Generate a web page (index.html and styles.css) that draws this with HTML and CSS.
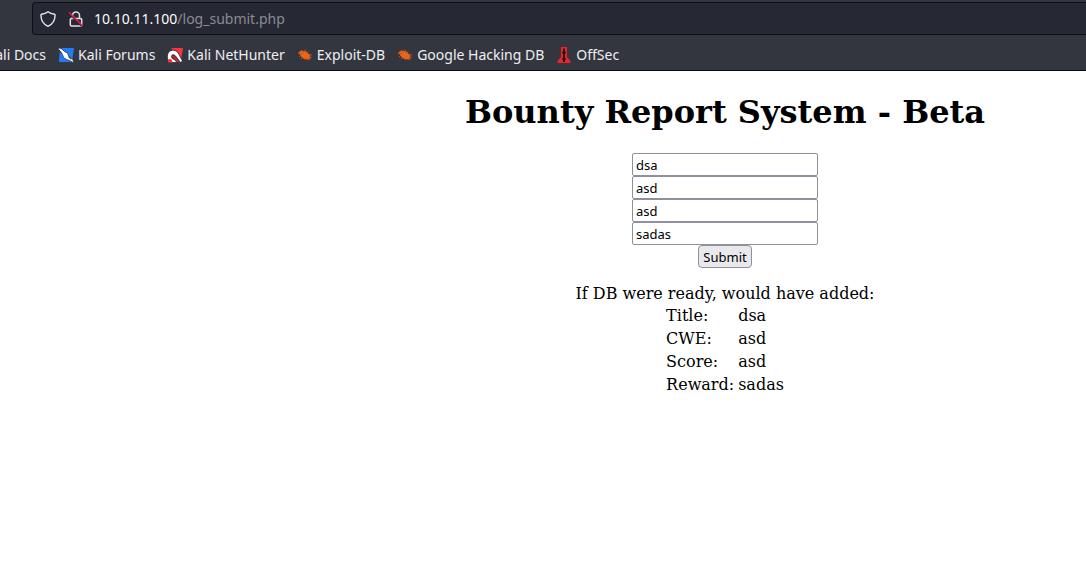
FILE: index.html
```html
<!DOCTYPE html>
<html lang="en">
<head>
<meta charset="utf-8">
<title>Bounty Report System - Beta</title>
<link rel="stylesheet" href="styles.css">
</head>
<body>
<header class="chrome">
  <div class="address-bar">
    <svg class="shield" width="16" height="16" viewBox="0 0 16 16" fill="none" stroke="#e8e8ec" stroke-width="1.4" stroke-linejoin="round"><path d="M8 .8c1.8 1.4 4 2.200 6.400 2.500.5.1.7.3.7.8C15 9.500 12.500 13.500 8 15.300 3.500 13.500 1 9.500.9 4.100c0-.5.2-.7.7-.8C4 3 6.200 2.200 8 .8z"/></svg>
    <svg class="lock" width="16" height="16" viewBox="0 0 16 16" fill="none"><path d="M4.500 7.500V4.600a3.500 3.500 0 0 1 7 0v2.900M3.500 7.500h9a1.200 1.200 0 0 1 1.200 1.200v5a1.200 1.200 0 0 1-1.200 1.200h-9a1.200 1.200 0 0 1-1.200-1.200v-5a1.200 1.200 0 0 1 1.200-1.200z" stroke="#e0e0e4" stroke-width="1.500"/><path d="M1 2.500l12.500 12.500" stroke="#262833" stroke-width="1.500"/><path d="M1 1.300l13.700 13.700" stroke="#f01a4f" stroke-width="1.500"/></svg>
    <span class="url"><span class="host">10.10.11.100</span>/log_submit.php</span>
  </div>
  <nav class="bookmarks">
    <a class="bookmark clipped" href="#">Kali Docs</a>
    <a class="bookmark" href="#"><svg width="16" height="16" viewBox="0 0 16 16"><path d="M2 1h14l-2 14H1z" fill="#237cf5"/><path d="M0 .5l4 1.500 2.500 2.500 3 1.500 1.500 3.500 4 3 .5 3.500-3-2-4-1.500-3-2-1-3-3-3z" fill="#fff" stroke="#26313e" stroke-width=".8"/><path d="M1 3l3 3.500M10.500 9.500l2.500 3" fill="none" stroke="#202a36"/></svg>Kali Forums</a>
    <a class="bookmark" href="#"><svg width="16" height="16" viewBox="0 0 16 16"><path d="M4 1h12l-2 12z" fill="#f8333c"/><path d="M1.500 15C-.5 10 0 5.500 4 3.500c4-1 7 1 8.500 5l3 5.500-2 1.500-5-6.500C7 7 4.500 7.500 4.500 9.500c0 1.500 1.500 2.500 3.500 3.500l2 2.500H5z" fill="#fff" stroke="#25262c" stroke-width=".8"/><path d="M5 9.500c1-1.500 2.500-1 3.500.5l4 5.200H10L8 12.500z" fill="#d8202f"/><path d="M1 12.500l3-.5 2 3.500H1z" fill="#f52d38"/></svg>Kali NetHunter</a>
    <a class="bookmark" href="#"><svg width="16" height="16" viewBox="0 0 16 16"><path class="bug" d="M1.500 5.500C3.500 3.200 8 3.200 11 6l2.500 3-1.500 3.500C8 13 4.500 11 3.500 8.500z"/><path class="legs" d="M1 6.500h4M4 3l3 3M8 2.500l1 3M11 4.500l-1 2M12 7.500l3 .5M12 10l3 1M4 8l-2 2M6 10l-2 2M9 11l-1 2M12 11l1 2"/></svg>Exploit-DB</a>
    <a class="bookmark" href="#"><svg width="16" height="16" viewBox="0 0 16 16"><path class="bug" d="M1.500 5.500C3.500 3.200 8 3.200 11 6l2.500 3-1.500 3.500C8 13 4.500 11 3.500 8.500z"/><path class="legs" d="M1 6.500h4M4 3l3 3M8 2.500l1 3M11 4.500l-1 2M12 7.500l3 .5M12 10l3 1M4 8l-2 2M6 10l-2 2M9 11l-1 2M12 11l1 2"/></svg>Google Hacking DB</a>
    <a class="bookmark" href="#"><svg width="16" height="16" viewBox="0 0 16 16"><path d="M5 0h6v10l3.500 4v2h-13v-2L5 10z" fill="#e5272b"/><path d="M7 1.500h2L9 4l1 1.500L9 7v3.500l1 2-1 .5v2H7v-2l-1-.5 1-2V7L6 5.500 7 4z" fill="#340d13"/></svg>OffSec</a>
  </nav>
</header>
<main class="page">
  <h1 class="title">Bounty Report System - Beta</h1>
  <form class="report-form">
    <input class="field" type="text" value="dsa" aria-label="Title">
    <input class="field" type="text" value="asd" aria-label="CWE">
    <input class="field" type="text" value="asd" aria-label="Score">
    <input class="field" type="text" value="sadas" aria-label="Reward">
    <button class="submit" type="button">Submit</button>
  </form>
  <p class="message">If DB were ready, would have added:</p>
  <table class="result">
    <tr><td>Title:</td><td>dsa</td></tr>
    <tr><td>CWE:</td><td>asd</td></tr>
    <tr><td>Score:</td><td>asd</td></tr>
    <tr><td>Reward:</td><td>sadas</td></tr>
  </table>
</main>
</body>
</html>
```
FILE: styles.css
```css
body {
  margin: 0;
  background: #fff;
  color: #000;
  font: 16px/19px "DejaVu Serif", serif;
}

.chrome {
  padding-top: 2px;
  background: #33363f;
  border-bottom: 1px solid #0b0b10;
  font: 14px/20px "Noto Sans", sans-serif;
  overflow: hidden;
}

.address-bar {
  display: flex;
  align-items: center;
  height: 31px;
  margin-left: 32px;
  padding-left: 7px;
  background: #262833;
  border: 1px solid #0e0f15;
  border-right: 0;
  border-radius: 4px 0 0 4px;
}

.lock { margin-left: 12px; }

.url {
  margin-left: 10px;
  color: #8b8c92;
}

.host { color: #fbfbfe; }

.bookmarks {
  display: flex;
  align-items: center;
  gap: 12px;
  padding: 10px 0 5px;
}

.bookmark {
  display: flex;
  flex: none;
  align-items: center;
  gap: 4px;
  color: #eeeef2;
  text-decoration: none;
  white-space: nowrap;
}

.clipped {
  justify-content: flex-end;
  width: 46px;
}

.bug { fill: #ed6415; }

.legs {
  fill: none;
  stroke: #b9541f;
  stroke-width: 1;
}

.page {
  display: flex;
  flex-direction: column;
  align-items: center;
  padding: 22px 0 0 364px;
}

.title {
  margin: 0;
  font-size: 32px;
  line-height: 38px;
}

.report-form {
  display: flex;
  flex-direction: column;
  align-items: center;
  margin-top: 22px;
}

.field,
.submit {
  box-sizing: border-box;
  height: 23px;
  margin: 0;
  border: 1px solid #8f8f9d;
  color: #000;
  font: 13px/17px "Noto Sans", sans-serif;
}

.field {
  width: 186px;
  padding: 1px 3px;
  border-radius: 2px;
  background: #fff;
}

.submit {
  padding: 1px 4px 0;
  border-radius: 4px;
  background: #e9e9ed;
}

.message { margin: 16px 0 0; }

.result {
  border-spacing: 2px;
}

.result td { padding: 1px; }
```
